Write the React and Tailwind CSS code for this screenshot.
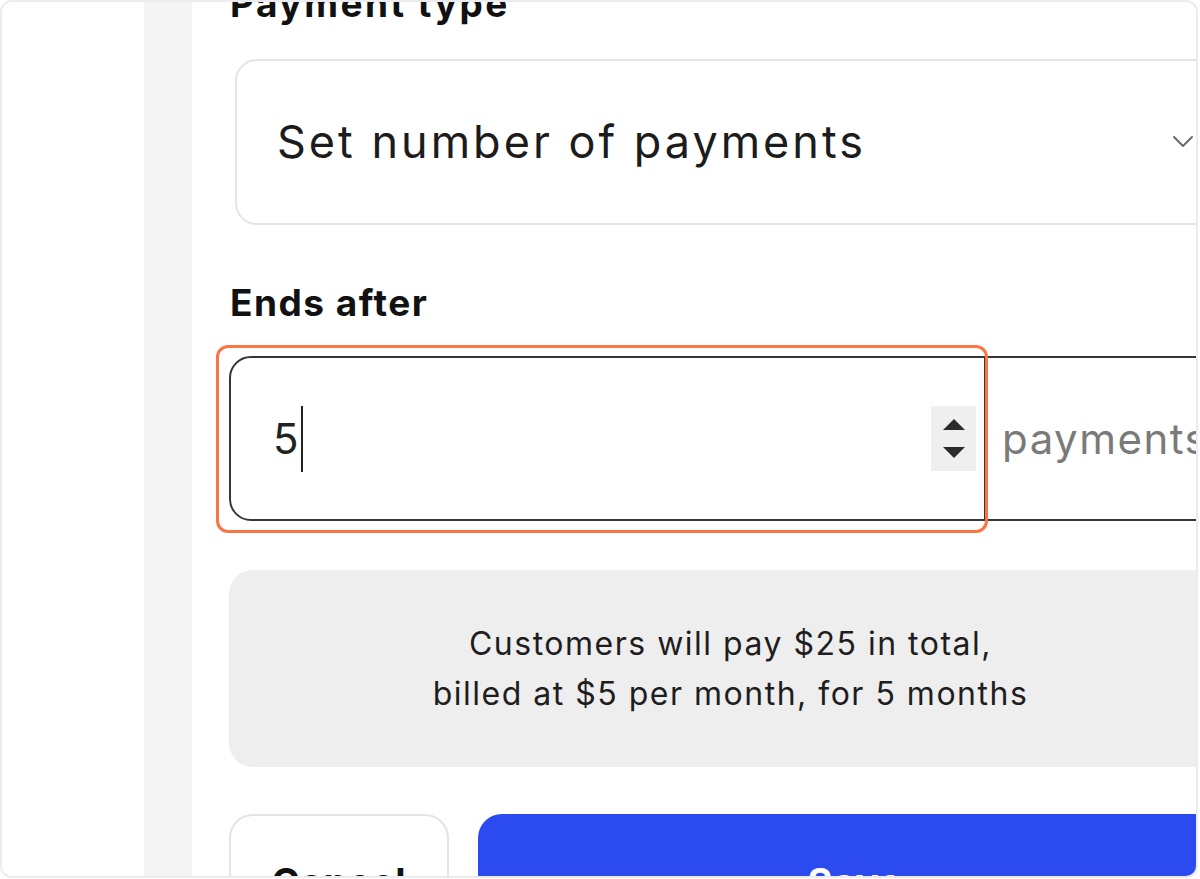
import React from 'react';

const font = { fontFamily: 'Inter, "Noto Sans", sans-serif' };

const Chevron = () => (
    <svg width="22" height="14" viewBox="0 0 22 14" fill="none">
        <path d="M2 2l9 9 9-9" stroke="#6b6b6b" strokeWidth="2" strokeLinecap="round" strokeLinejoin="round" />
    </svg>
);

const Spinner = () => (
    <div className="w-[45px] h-[65px] bg-[#efefef] flex flex-col items-center justify-center gap-[17px]">
        <svg width="22" height="11" viewBox="0 0 22 11">
            <path d="M11 0L22 11H0z" fill="#2b2b2b" />
        </svg>
        <svg width="22" height="11" viewBox="0 0 22 11">
            <path d="M0 0h22L11 11z" fill="#2b2b2b" />
        </svg>
    </div>
);

export default function App() {
    return (
        <div className="w-[1200px] h-[879px] bg-white" style={font}>
            <div className="w-[1198px] h-[878px] rounded-[12px] border-2 border-[#ebebf0] overflow-hidden flex bg-white">
                <div className="w-[142px] shrink-0 bg-white" />
                <div className="w-[48px] shrink-0 bg-[#f4f4f5]" />

                <div className="w-[1044px] shrink-0 pl-[37px] pr-[4px] flex flex-col">
                    {/* Payment type */}
                    <label className="shrink-0 -mt-[20px] h-[44px] leading-[44px] text-[37px] font-bold tracking-[2.5px] text-[#111] ml-[1px]">Payment type</label>
                    <div className="shrink-0 mt-[33px] ml-[6px] h-[166px] rounded-[22px] border-2 border-[#e4e4e7] flex items-center justify-between pl-[40px] pr-[36px]">
                        <span className="text-[45px] text-[#1c1c1c] tracking-[3px]">Set number of payments</span>
                        <Chevron />
                    </div>

                    {/* Ends after */}
                    <label className="shrink-0 mt-[56px] h-[44px] leading-[44px] text-[37px] font-bold tracking-[1.5px] text-[#111] ml-[1px]">Ends after</label>
                    <div className="shrink-0 mt-[31px] flex h-[165px]">
                        <div className="relative w-[757px] shrink-0 border-2 border-[#363636] rounded-l-[22px] flex items-center pl-[42px] pr-[8px]">
                            <span className="text-[42px] text-[#222]">5</span>
                            <span className="w-[2px] h-[66px] bg-[#222] ml-[2px]" />
                            <div className="ml-auto">
                                <Spinner />
                            </div>
                            <div className="absolute -left-[15px] -top-[13px] -right-[4px] -bottom-[14px] border-[3px] border-[#fa7446] rounded-[12px] pointer-events-none" />
                        </div>
                        <div className="flex-1 border-y-2 border-r-2 border-[#363636] rounded-r-[22px] flex items-center pl-[16px]">
                            <span className="text-[42px] tracking-[1.5px] text-[#7a7a7a]">payments</span>
                        </div>
                    </div>

                    {/* Summary */}
                    <div className="shrink-0 mt-[49px] h-[197px] rounded-[24px] bg-[#eeeeee] flex flex-col items-center justify-center text-[32px] tracking-[1.5px] leading-[50px] text-[#1e1e1e]">
                        <p>Customers will pay $25 in total,</p>
                        <p>billed at $5 per month, for 5 months</p>
                    </div>

                    {/* Actions */}
                    <div className="shrink-0 mt-[47px] flex gap-[29px]">
                        <button className="w-[220px] h-[136px] shrink-0 rounded-[24px] border-2 border-[#e4e4e7] bg-white text-[38px] font-bold tracking-[1px] text-[#111]">Cancel</button>
                        <button className="flex-1 h-[136px] rounded-[24px] bg-[#2b4aef] text-[38px] font-bold tracking-[1px] text-white">Save</button>
                    </div>
                </div>
            </div>
        </div>
    );
}
